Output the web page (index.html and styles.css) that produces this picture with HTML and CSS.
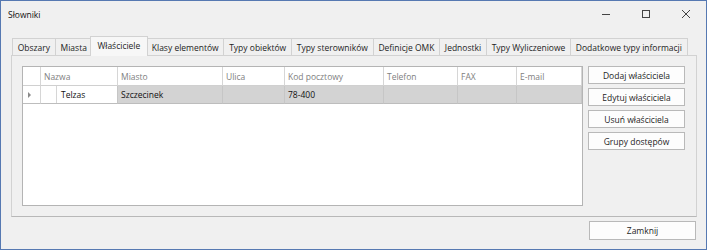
FILE: index.html
```html
<!DOCTYPE html>
<html>
  <head>
    <title>Słowniki</title>
    <link rel="stylesheet" href="styles.css">
  </head>
  <body>
    <div class="window">
      <div class="titlebar">
        <span class="title">Słowniki</span>
        <div class="controls">
          <span class="ctl">
            <svg width="10" height="10" viewBox="0 0 10 10"><path d="M1 5.5h8" stroke="#444" stroke-width="1"/></svg>
          </span>
          <span class="ctl">
            <svg width="10" height="10" viewBox="0 0 10 10"><rect x="1.5" y="1.5" width="7" height="7" fill="none" stroke="#444" stroke-width="1"/></svg>
          </span>
          <span class="ctl">
            <svg width="10" height="10" viewBox="0 0 10 10"><path d="M1 1l8 8M9 1l-8 8" stroke="#444" stroke-width="1"/></svg>
          </span>
        </div>
      </div>

      <div class="content">
        <div class="tabs">
          <div class="tab">Obszary</div>
          <div class="tab">Miasta</div>
          <div class="tab tab-active">Właściciele</div>
          <div class="tab">Klasy elementów</div>
          <div class="tab">Typy obiektów</div>
          <div class="tab">Typy sterowników</div>
          <div class="tab">Definicje OMK</div>
          <div class="tab">Jednostki</div>
          <div class="tab">Typy Wyliczeniowe</div>
          <div class="tab">Dodatkowe typy informacji</div>
        </div>

        <div class="panel">
          <div class="grid">
            <div class="grid-row grid-head">
              <div class="cell"></div>
              <div class="cell">Nazwa</div>
              <div class="cell">Miasto</div>
              <div class="cell">Ulica</div>
              <div class="cell">Kod pocztowy</div>
              <div class="cell">Telefon</div>
              <div class="cell">FAX</div>
              <div class="cell">E-mail</div>
            </div>
            <div class="grid-row grid-sel">
              <div class="cell cell-rh"><span class="arrow"></span></div>
              <div class="cell cell-tree">
                <span class="indent"></span>
                <span class="current">Telzas</span>
              </div>
              <div class="cell">Szczecinek</div>
              <div class="cell"></div>
              <div class="cell">78-400</div>
              <div class="cell"></div>
              <div class="cell"></div>
              <div class="cell"></div>
            </div>
          </div>

          <div class="actions">
            <button class="btn">Dodaj właściciela</button>
            <button class="btn">Edytuj właściciela</button>
            <button class="btn">Usuń właściciela</button>
            <button class="btn">Grupy dostępów</button>
          </div>
        </div>

        <div class="footer">
          <button class="btn btn-close">Zamknij</button>
        </div>
      </div>
    </div>
  </body>
</html>
```

FILE: styles.css
```css
* {
  box-sizing: border-box;
}

body {
  margin: 0;
  font-family: "Open Sans", sans-serif;
  font-size: 8.5px;
  color: #1e1e1e;
}

.window {
  width: 707px;
  height: 250px;
  border: 1px solid #5679b2;
  background-color: #f0f0f0;
}

/* title bar */
.titlebar {
  height: 29px;
  display: flex;
  align-items: center;
  justify-content: space-between;
}

.title {
  padding-left: 7px;
  margin-top: -2px;
  color: #111;
}

.controls {
  display: flex;
  height: 100%;
}

.ctl {
  width: 40px;
  display: flex;
  align-items: center;
  justify-content: center;
  margin-top: -3px;
}

/* tabs */
.content {
  padding: 6px 9px 0 10px;
}

.tabs {
  display: flex;
  align-items: flex-end;
  height: 19px;
  padding-left: 1px;
  position: relative;
  z-index: 1;
}

.tab {
  height: 17px;
  padding: 0 4.75px;
  display: flex;
  align-items: center;
  background-color: #f0f0f0;
  border: 1px solid #d2d2d2;
  border-bottom: none;
  margin-left: -1px;
  white-space: nowrap;
  color: #1e1e1e;
}

.tab:first-child {
  margin-left: 0;
}

.tab-active {
  height: 20px;
  margin: 0 -2px -1px -3px;
  padding: 0 6.75px 2px;
  background-color: #f7f7f7;
  position: relative;
  z-index: 2;
}

.tab-active + .tab {
  margin-left: 0;
}

.panel {
  width: 686px;
  height: 162px;
  border: 1px solid #d2d2d2;
  border-bottom-color: #b8b8b8;
  padding: 10px 0 0 10px;
  display: flex;
  align-items: flex-start;
  gap: 5px;
  background-color: #f0f0f0;
}

/* grid */
.grid {
  width: 561px;
  height: 140px;
  border: 1px solid #b4b4b4;
  background-color: #fff;
}

.grid-row {
  display: grid;
  grid-template-columns: 18px 77px 105px 62px 99px 74px 59px 65px;
}

.cell {
  padding-left: 3px;
  display: flex;
  align-items: center;
  border-right: 1px solid #d6d6d6;
  border-bottom: 1px solid #d0d0d0;
  white-space: nowrap;
}

.grid-head .cell {
  height: 19px;
  color: #808080;
  background-color: #fff;
}

.grid-sel .cell {
  height: 18px;
  background-color: #d3d3d3;
  border-right-color: #c6c6c6;
  border-bottom-color: #bdbdbd;
  color: #111;
}

.grid-sel .cell-rh {
  background-color: #fff;
  border-right-color: #d6d6d6;
  justify-content: center;
  padding-left: 0;
}

.arrow {
  width: 0;
  height: 0;
  border-top: 3px solid transparent;
  border-bottom: 3px solid transparent;
  border-left: 3px solid #8a8a8a;
  margin-left: -4px;
}

.grid-sel .cell-tree {
  padding-left: 0;
  background-color: #fff;
}

.indent {
  width: 16px;
  height: 100%;
  border-right: 1px solid #d6d6d6;
}

.current {
  padding-left: 4px;
}

/* buttons */
.actions {
  display: flex;
  flex-direction: column;
  gap: 4px;
}

.btn {
  width: 97px;
  height: 18px;
  padding: 0;
  font-family: "Open Sans", sans-serif;
  font-size: 8.5px;
  color: #1e1e1e;
  background-color: #fdfdfd;
  border: 1px solid #b9b9b9;
  border-radius: 0;
}

.footer {
  display: flex;
  justify-content: flex-end;
  padding-top: 4px;
  padding-right: 1px;
}

.btn-close {
  width: 107px;
  height: 19px;
}
```
